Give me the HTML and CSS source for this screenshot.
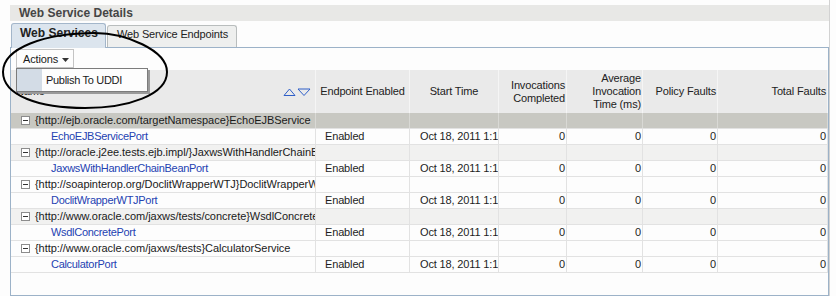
FILE: index.html
```html
<!DOCTYPE html>
<html>
<head>
<meta charset="utf-8">
<link rel="stylesheet" href="styles.css">
</head>
<body>
<div class="page">
  <div class="titlebar">Web Service Details</div>
  <div class="tabs">
    <div class="tab active">Web Services</div>
    <div class="tab inactive">Web Service Endpoints</div>
  </div>
  <div class="panel">
    <div class="toolbar">
      <div class="actions">Actions <svg class="caret" width="7" height="4" viewBox="0 0 7 4"><polygon points="0,0 7,0 3.5,4" fill="#333"/></svg></div>
    </div>
    <div class="grid">
      <div class="row head">
        <div class="cell namehead"><span>Name</span><svg class="sort" width="28" height="8" viewBox="0 0 28 8"><polygon points="1,7.5 6.5,1 12,7.5" fill="none" stroke="#2f5fc8" stroke-width="1"/><polygon points="15,1 27,1 21,7.5" fill="none" stroke="#2f5fc8" stroke-width="1"/></svg></div>
        <div class="cell ctr">Endpoint Enabled</div>
        <div class="cell ctr">Start Time</div>
        <div class="cell rt"><div>Invocations<br>Completed</div></div>
        <div class="cell rt"><div>Average<br>Invocation<br>Time (ms)</div></div>
        <div class="cell rt">Policy Faults</div>
        <div class="cell rt">Total Faults</div>
      </div>

      <div class="row group selected">
        <div class="cell gname"><svg class="exp" width="9" height="9" viewBox="0 0 9 9"><rect x="0.5" y="0.5" width="8" height="8" fill="#fff" stroke="#8c8c8c"/><line x1="2" y1="4.5" x2="7" y2="4.5" stroke="#333"/></svg>{http://ejb.oracle.com/targetNamespace}EchoEJBService</div>
        <div class="cell"></div><div class="cell"></div><div class="cell"></div><div class="cell"></div><div class="cell"></div><div class="cell"></div>
      </div>
      <div class="row">
        <div class="cell pname"><a class="link">EchoEJBServicePort</a></div>
        <div class="cell txt">Enabled</div>
        <div class="cell txt time">Oct 18, 2011 1:13:58 PM</div>
        <div class="cell num">0</div><div class="cell num">0</div><div class="cell num">0</div><div class="cell num">0</div>
      </div>

      <div class="row group band">
        <div class="cell gname"><svg class="exp" width="9" height="9" viewBox="0 0 9 9"><rect x="0.5" y="0.5" width="8" height="8" fill="#fff" stroke="#8c8c8c"/><line x1="2" y1="4.5" x2="7" y2="4.5" stroke="#333"/></svg>{http://oracle.j2ee.tests.ejb.impl/}JaxwsWithHandlerChainBeanService</div>
        <div class="cell"></div><div class="cell"></div><div class="cell"></div><div class="cell"></div><div class="cell"></div><div class="cell"></div>
      </div>
      <div class="row">
        <div class="cell pname"><a class="link">JaxwsWithHandlerChainBeanPort</a></div>
        <div class="cell txt">Enabled</div>
        <div class="cell txt time">Oct 18, 2011 1:13:58 PM</div>
        <div class="cell num">0</div><div class="cell num">0</div><div class="cell num">0</div><div class="cell num">0</div>
      </div>

      <div class="row group">
        <div class="cell gname"><svg class="exp" width="9" height="9" viewBox="0 0 9 9"><rect x="0.5" y="0.5" width="8" height="8" fill="#fff" stroke="#8c8c8c"/><line x1="2" y1="4.5" x2="7" y2="4.5" stroke="#333"/></svg>{http://soapinterop.org/DoclitWrapperWTJ}DoclitWrapperWTJService</div>
        <div class="cell"></div><div class="cell"></div><div class="cell"></div><div class="cell"></div><div class="cell"></div><div class="cell"></div>
      </div>
      <div class="row">
        <div class="cell pname"><a class="link">DoclitWrapperWTJPort</a></div>
        <div class="cell txt">Enabled</div>
        <div class="cell txt time">Oct 18, 2011 1:13:58 PM</div>
        <div class="cell num">0</div><div class="cell num">0</div><div class="cell num">0</div><div class="cell num">0</div>
      </div>

      <div class="row group band">
        <div class="cell gname"><svg class="exp" width="9" height="9" viewBox="0 0 9 9"><rect x="0.5" y="0.5" width="8" height="8" fill="#fff" stroke="#8c8c8c"/><line x1="2" y1="4.5" x2="7" y2="4.5" stroke="#333"/></svg>{http://www.oracle.com/jaxws/tests/concrete}WsdlConcreteService</div>
        <div class="cell"></div><div class="cell"></div><div class="cell"></div><div class="cell"></div><div class="cell"></div><div class="cell"></div>
      </div>
      <div class="row">
        <div class="cell pname"><a class="link">WsdlConcretePort</a></div>
        <div class="cell txt">Enabled</div>
        <div class="cell txt time">Oct 18, 2011 1:13:58 PM</div>
        <div class="cell num">0</div><div class="cell num">0</div><div class="cell num">0</div><div class="cell num">0</div>
      </div>

      <div class="row group">
        <div class="cell gname"><svg class="exp" width="9" height="9" viewBox="0 0 9 9"><rect x="0.5" y="0.5" width="8" height="8" fill="#fff" stroke="#8c8c8c"/><line x1="2" y1="4.5" x2="7" y2="4.5" stroke="#333"/></svg>{http://www.oracle.com/jaxws/tests}CalculatorService</div>
        <div class="cell"></div><div class="cell"></div><div class="cell"></div><div class="cell"></div><div class="cell"></div><div class="cell"></div>
      </div>
      <div class="row">
        <div class="cell pname"><a class="link">CalculatorPort</a></div>
        <div class="cell txt">Enabled</div>
        <div class="cell txt time">Oct 18, 2011 1:13:58 PM</div>
        <div class="cell num">0</div><div class="cell num">0</div><div class="cell num">0</div><div class="cell num">0</div>
      </div>
    </div>
  </div>

  <div class="menu">
    <div class="menu-icon"></div>
    <div class="menu-text">Publish To UDDI</div>
  </div>

  <svg class="callout" width="180" height="120" viewBox="0 0 180 120">
    <path d="M 3 72 C 3 48, 45 33, 95 33 C 125 33, 167 50, 167 72 C 167 95, 128 108, 85 108 C 40 108, 3 96, 3 72 Z" fill="none" stroke="#000" stroke-width="2"/>
  </svg>
</div>
</body>
</html>
```

FILE: styles.css
```css
* { box-sizing: border-box; }

body {
  margin: 0;
  background: #fdfdfd;
  font-family: "Liberation Sans", Arial, sans-serif;
  font-size: 11px;
  color: #1e1e1e;
  letter-spacing: -0.15px;
}

.page {
  position: relative;
  width: 830px;
  height: 296px;
  padding-left: 10px;
  border-right: 1px solid #d2d2d2;
  display: flex;
  flex-direction: column;
}

.titlebar {
  margin-top: 5px;
  height: 16px;
  background: #e8e8e6;
  padding-left: 9px;
  font-weight: bold;
  font-size: 12px;
  line-height: 16px;
  color: #454545;
  letter-spacing: 0;
}

.tabs {
  display: flex;
  align-items: flex-end;
  gap: 1px;
  margin-top: 2px;
  height: 24px;
  padding-left: 1px;
}

.tab {
  border: 1px solid #b9bdbd;
  border-bottom: none;
  border-radius: 3px 3px 0 0;
  white-space: nowrap;
  color: #222;
}

.tab.active {
  width: 95px;
  height: 25px;
  margin-bottom: -1px;
  z-index: 1;
  background: #dce5ee;
  border-color: #a3b6ca;
  font-weight: bold;
  font-size: 12px;
  letter-spacing: 0;
  padding-left: 8px;
  line-height: 19px;
}

.tab.inactive {
  width: 130px;
  height: 22px;
  background: #eeefee;
  padding-left: 9px;
  line-height: 16px;
}

.panel {
  flex: 1;
  width: 819px;
  border: 1px solid #9cb2c8;
  background: #fdfdfd;
  display: flex;
  flex-direction: column;
}

.toolbar {
  height: 22px;
  padding: 1px 0 0 5px;
}

.actions {
  display: inline-flex;
  align-items: center;
  gap: 4px;
  width: 58px;
  height: 19px;
  padding-left: 6px;
  border: 1px solid #c4c4c4;
  background: #fdfdfd;
  color: #1a1a1a;
}

.caret { margin-top: 3px; }

.grid {
  width: 817px;
}

.row {
  display: grid;
  grid-template-columns: 305px 94px 89px 68px 76px 75px 110px;
  height: 16px;
  border-bottom: 1px solid #e2e2e2;
  background: #fdfdfd;
}

.row.head {
  height: 43px;
  background: #eaeaea;
  border-bottom: none;
  color: #222;
  line-height: 13px;
}

.cell {
  border-right: 1px solid #e2e2e2;
  overflow: hidden;
  white-space: nowrap;
  line-height: 15px;
}

.head .cell {
  display: flex;
  align-items: center;
  border-right-color: #f5f5f5;
  line-height: 13px;
}

.head .ctr { justify-content: center; }
.head .rt { justify-content: flex-end; text-align: right; padding-right: 1px; }

.namehead {
  justify-content: space-between;
  padding: 0 4px 0 5px;
}

.sort { display: block; }

.row.selected { background: #c8c8c2; }
.row.selected .cell { border-right-color: #d9d9d5; }
.row.band { background: #f1f1f0; }

.gname {
  display: flex;
  align-items: center;
  padding-left: 10px;
  color: #1a1a1a;
  letter-spacing: -0.05px;
}

.exp { flex: none; margin-right: 5px; }

.pname { padding-left: 40px; }

.link { color: #2442b2; letter-spacing: -0.3px; }

.txt { padding-left: 9px; }
.time { padding-left: 10px; }

.num { text-align: right; padding-right: 1px; }

.menu {
  position: absolute;
  left: 16px;
  top: 68px;
  width: 132px;
  height: 24px;
  display: flex;
  border: 1px solid #7c7c7c;
  background: #fdfdfd;
  box-shadow: 2px 2px 0 #9a9a9a;
  z-index: 5;
}

.menu-icon {
  width: 25px;
  background: #d3dce6;
}

.menu-text {
  padding-left: 4px;
  line-height: 22px;
  color: #1a1a1a;
  letter-spacing: -0.3px;
}

.callout {
  position: absolute;
  left: 0;
  top: 0;
  z-index: 10;
  pointer-events: none;
}
```
